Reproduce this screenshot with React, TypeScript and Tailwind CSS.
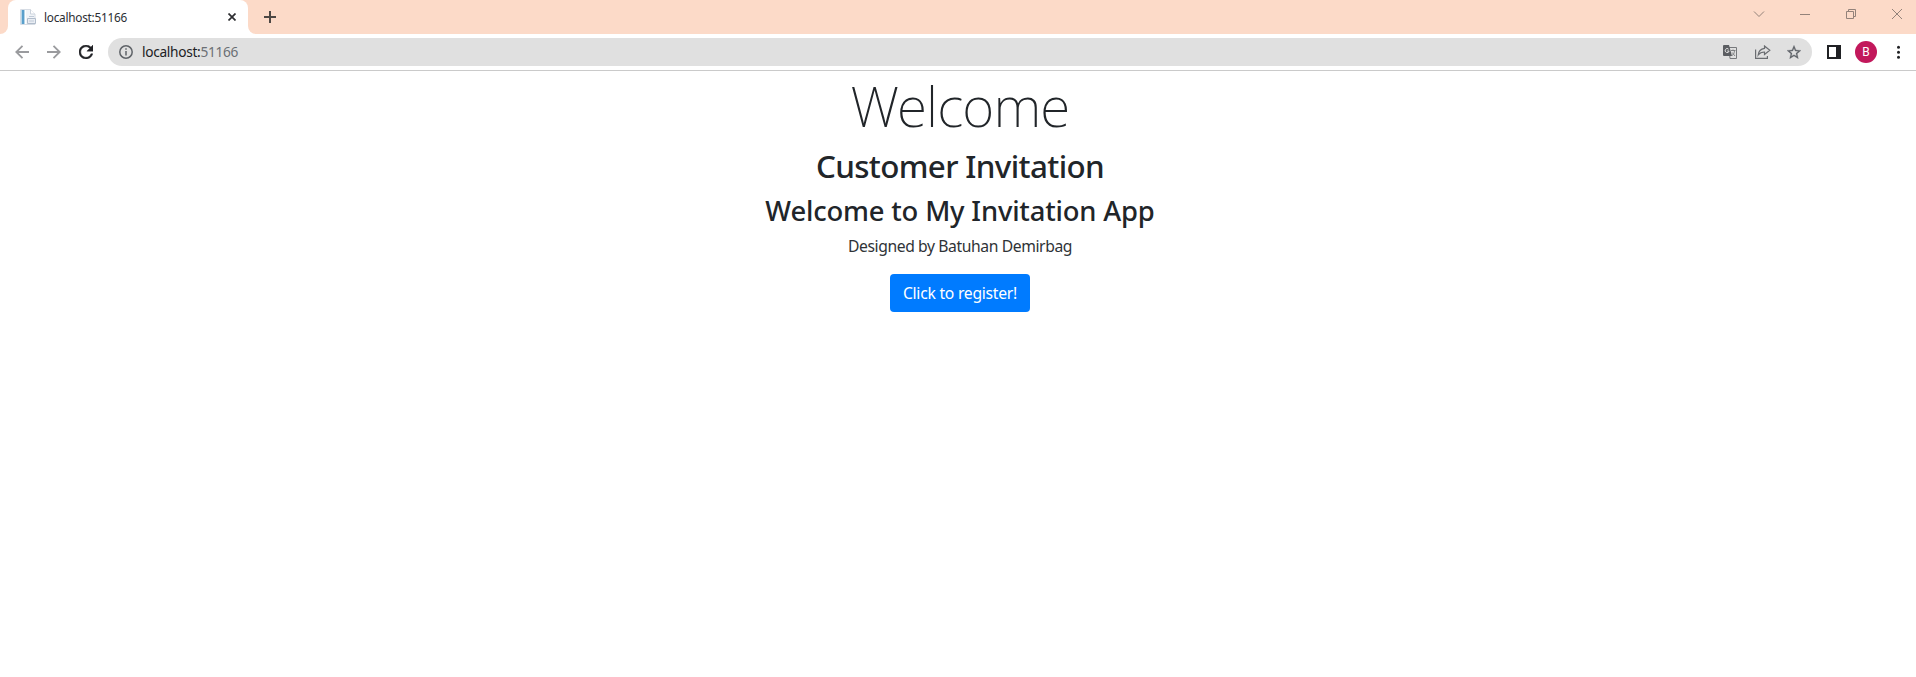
import type { ReactNode } from "react";

function TabStrip() {
  return (
    <div className="flex h-[34px] items-stretch justify-between bg-[#fcdac8]">
      <div className="flex">
        <div className="w-2 bg-white">
          <div className="h-full rounded-br-lg bg-[#fcdac8]" />
        </div>
        <div className="flex w-[240px] items-center rounded-t-lg bg-white px-3">
          <svg width="16" height="16" viewBox="0 0 16 16" className="shrink-0">
            <path d="M.5.5h10L15 5v10.500H.5z" fill="#f1f4f8" stroke="#d6dce4" />
            <path d="M1 1h4v14H1z" fill="#b5d5e8" />
            <path d="M2 1h2v14H2z" fill="#5a9fcb" />
            <path d="M5 1h1v14H5z" fill="#fff" />
            <path d="M10.500.5V5H15" fill="#fff" stroke="#ccd3dc" />
            <path d="M7.500 9.500h8v5h-8z" fill="#e9edf3" stroke="#b0bccb" />
            <path d="M9 7.500h5M9 12h5" stroke="#c0cad7" />
          </svg>
          <span className="ml-2 flex-1 pb-px text-[11.8px] leading-4 tracking-[-0.25px] text-[#2b2e33]">
            localhost:51166
          </span>
          <svg width="8" height="8" viewBox="0 0 8 8" stroke="#2d2e31" strokeWidth="1.700">
            <path d="M.5.5l7 7M7.500.5l-7 7" />
          </svg>
        </div>
        <div className="w-2 bg-white">
          <div className="h-full rounded-bl-lg bg-[#fcdac8]" />
        </div>
        <svg width="12" height="12" viewBox="0 0 12 12" stroke="#4d4744" strokeWidth="2" className="mt-[11px] ml-2">
          <path d="M6 0v12M0 6h12" />
        </svg>
      </div>
      <div className="flex pr-3.5 text-[#93827a]">
        <svg width="12" height="12" viewBox="0 0 12 12" className="mt-2 mr-[35px]" fill="none" stroke="currentColor">
          <path d="M1 3.500l5 5 5-5" />
        </svg>
        <svg width="10" height="10" viewBox="0 0 10 10" className="mt-[9px] mr-9" fill="none" stroke="currentColor">
          <path d="M0 5.500h10" />
        </svg>
        <svg width="10" height="10" viewBox="0 0 10 10" className="mt-[9px] mr-9" fill="none" stroke="currentColor">
          <path d="M.5 2.500h7v7h-7zM2.500 2.500v-2h7v7h-2" />
        </svg>
        <svg width="10" height="10" viewBox="0 0 10 10" className="mt-[9px]" fill="none" stroke="currentColor">
          <path d="M0 0l10 10M10 0L0 10" />
        </svg>
      </div>
    </div>
  );
}

function Toolbar() {
  return (
    <div className="flex h-[37px] items-start border-b border-[#cacaca] bg-white pt-1">
      <div className="flex h-7 items-center">
        <svg width="14" height="14" viewBox="0 0 14 14" fill="none" stroke="#9a9b9e" strokeWidth="1.800" className="ml-[15px]">
          <path d="M14 7H1.500M7.500.8L1.300 7l6.200 6.200" />
        </svg>
        <svg width="14" height="14" viewBox="0 0 14 14" fill="none" stroke="#9a9b9e" strokeWidth="1.800" className="ml-[18px]">
          <path d="M0 7h12.500M6.500.8L12.700 7l-6.200 6.200" />
        </svg>
        <svg width="14" height="14" viewBox="4 4 16 16" fill="#202124" className="ml-[18px]">
          <path d="M17.650 6.350C16.200 4.900 14.210 4 12 4c-4.420 0-7.990 3.580-7.990 8s3.570 8 7.990 8c3.730 0 6.840-2.550 7.730-6h-2.080c-.820 2.330-3.040 4-5.650 4-3.310 0-6-2.690-6-6s2.690-6 6-6c1.660 0 3.140.690 4.220 1.780L13 11h7V4l-2.350 2.350z" stroke="#202124" strokeWidth=".5" />
        </svg>
      </div>
      <div className="ml-[15px] flex h-7 w-[1704px] items-center rounded-full bg-[#e0e0e0] px-[11px]">
        <svg width="14" height="14" viewBox="0 0 14 14" fill="none" stroke="#5f6368" strokeWidth="1.500">
          <circle cx="7" cy="7" r="6.200" />
          <path d="M7 6v4.500M7 3.300v1.500" />
        </svg>
        <span className="ml-[9px] flex-1 pb-px text-[13.7px] leading-5 tracking-[-0.31px] text-[#202124]">
          localhost:<span className="text-[#6b6f74]">51166</span>
        </span>
        <svg width="14" height="14" viewBox="0 0 14 14" className="mr-[18px]">
          <path d="M6 2.500h7.500v11H7z" fill="#e0e0e0" stroke="#77797c" />
          <path d="M0 1a1 1 0 0 1 1-1h5l3 11H1a1 1 0 0 1-1-1z" fill="#5b5d61" />
          <path d="M5.600 4.200A2 2 0 1 0 6.100 6H4.200" fill="none" stroke="#e0e0e0" />
          <path d="M8 5.500h4.500M10 4.500v1M9 10.500c1.700-1 2.300-2.500 2.500-5M9.200 7.500l2.800 3.500" fill="none" stroke="#77797c" strokeWidth=".9" />
        </svg>
        <svg width="16" height="14" viewBox="0 0 16 14" fill="none" stroke="#6a6d71" strokeWidth="1.200" className="mr-4">
          <path d="M.6 4.500v8.900h11.800V11" />
          <path d="M9.500 1l5.300 4.200-5.300 4.200V7C6.700 7 4.700 7.900 3.200 10 3.500 6.800 5.500 4 9.500 3.400z" />
        </svg>
        <svg width="14" height="14" viewBox="2 2 20 19" fill="#5f6368">
          <path d="M22 9.240l-7.190-.620L12 2 9.190 8.630 2 9.240l5.460 4.730L5.820 21 12 17.270 18.180 21l-1.630-7.030L22 9.240zM12 15.400l-3.760 2.270 1-4.280-3.320-2.880 4.380-.380L12 6.100l1.710 4.040 4.380.380-3.320 2.880 1 4.280L12 15.400z" stroke="#5f6368" strokeWidth=".4" />
        </svg>
      </div>
      <div className="ml-[15px] flex h-7 items-center">
        <svg width="14" height="14" viewBox="0 0 14 14">
          <path d="M0 0h14v14H0z" fill="#202124" />
          <path d="M2 2h7v10H2z" fill="#fff" />
        </svg>
        <div className="ml-3.5 flex size-[22px] items-center justify-center rounded-full bg-[#c2185b] font-['Roboto',sans-serif] text-xs text-white">
          B
        </div>
        <svg width="4" height="14" viewBox="0 0 4 14" fill="#202124" className="ml-[19px]">
          <circle cx="2.500" cy="2.200" r="1.500" />
          <circle cx="2.500" cy="7.200" r="1.500" />
          <circle cx="2.500" cy="12.200" r="1.500" />
        </svg>
      </div>
    </div>
  );
}

function Centered({ children }: { children: ReactNode }) {
  return <main className="flex flex-col items-center pl-1 text-[#212529]">{children}</main>;
}

export default function App() {
  return (
    <div className="min-h-screen bg-white font-['Noto_Sans',sans-serif]">
      <TabStrip />
      <Toolbar />
      <Centered>
        <h1 className="mb-2 h-[67.2px] pt-px text-[55px] leading-[67.2px] font-extralight tracking-[-0.87px]">
          Welcome
        </h1>
        <h2 className="mb-2 h-[38.4px] pt-px text-[31.36px] leading-[38.4px] font-medium tracking-[-0.63px]">
          Customer Invitation
        </h2>
        <h3 className="mb-2 h-[33.6px] pt-px text-[27.4px] leading-[33.6px] font-medium tracking-[-0.17px]">
          Welcome to My Invitation App
        </h3>
        <p className="mb-4 h-6 text-[15.7px] leading-6 tracking-[-0.4px] text-[#2f3337]">
          Designed by Batuhan Demirbag
        </p>
        <button className="h-[38px] w-[140px] rounded bg-[#007bff] text-[15.7px] leading-6 tracking-[-0.25px] whitespace-nowrap text-white">
          Click to register!
        </button>
      </Centered>
    </div>
  );
}
